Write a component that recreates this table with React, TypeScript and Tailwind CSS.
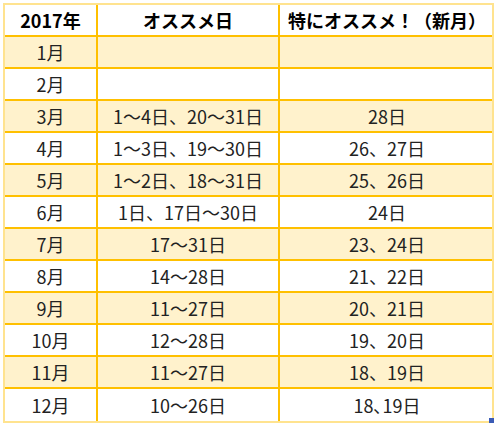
const rows = [
  { month: '1月', days: '', best: '' },
  { month: '2月', days: '', best: '' },
  { month: '3月', days: '1〜4日、20〜31日', best: '28日' },
  { month: '4月', days: '1〜3日、19〜30日', best: '26、27日' },
  { month: '5月', days: '1〜2日、18〜31日', best: '25、26日' },
  { month: '6月', days: '1日、17日〜30日', best: '24日' },
  { month: '7月', days: '17〜31日', best: '23、24日' },
  { month: '8月', days: '14〜28日', best: '21、22日' },
  { month: '9月', days: '11〜27日', best: '20、21日' },
  { month: '10月', days: '12〜28日', best: '19、20日' },
  { month: '11月', days: '11〜27日', best: '18、19日' },
  { month: '12月', days: '10〜26日', best: '18､19日' },
];

const cols = 'grid grid-cols-[93px_182px_214px]';

const App = () => {
  return (
    <div className="w-[500px] h-[430px] bg-white pl-[3px] pt-[3px]">
      <div
        className="relative w-[491px] border-2 border-[#ffe38f] text-[#222] text-[18px] leading-none"
        style={{ fontFamily: '"Noto Sans CJK JP", "Noto Sans", sans-serif' }}
      >
        <div className={`${cols} h-[32px] border-b-2 border-[#ffc000] font-bold text-black`}>
          <div className="flex items-center justify-center border-r-2 border-[#ffc000]">2017年</div>
          <div className="flex items-center justify-center border-r-2 border-[#ffc000]">オススメ日</div>
          <div className="flex items-center justify-center">特にオススメ！（新月）</div>
        </div>
        {rows.map((r, i) => (
          <div
            key={r.month}
            className={`${cols} h-[32px] ${i < rows.length - 1 ? 'border-b-2 border-[#ffc000]' : ''} ${i % 2 === 0 ? 'bg-[#fff2cc]' : 'bg-white'}`}
          >
            <div className="flex items-center justify-center border-r-2 border-[#ffc000]">{r.month}</div>
            <div className="flex items-center justify-center border-r-2 border-[#ffc000]">{r.days}</div>
            <div className="flex items-center justify-center">{r.best}</div>
          </div>
        ))}
        <div className="absolute right-[-2px] bottom-[-2px] w-[5px] h-[5px] bg-[#3b5bb5]" />
      </div>
    </div>
  );
};

export default App;
